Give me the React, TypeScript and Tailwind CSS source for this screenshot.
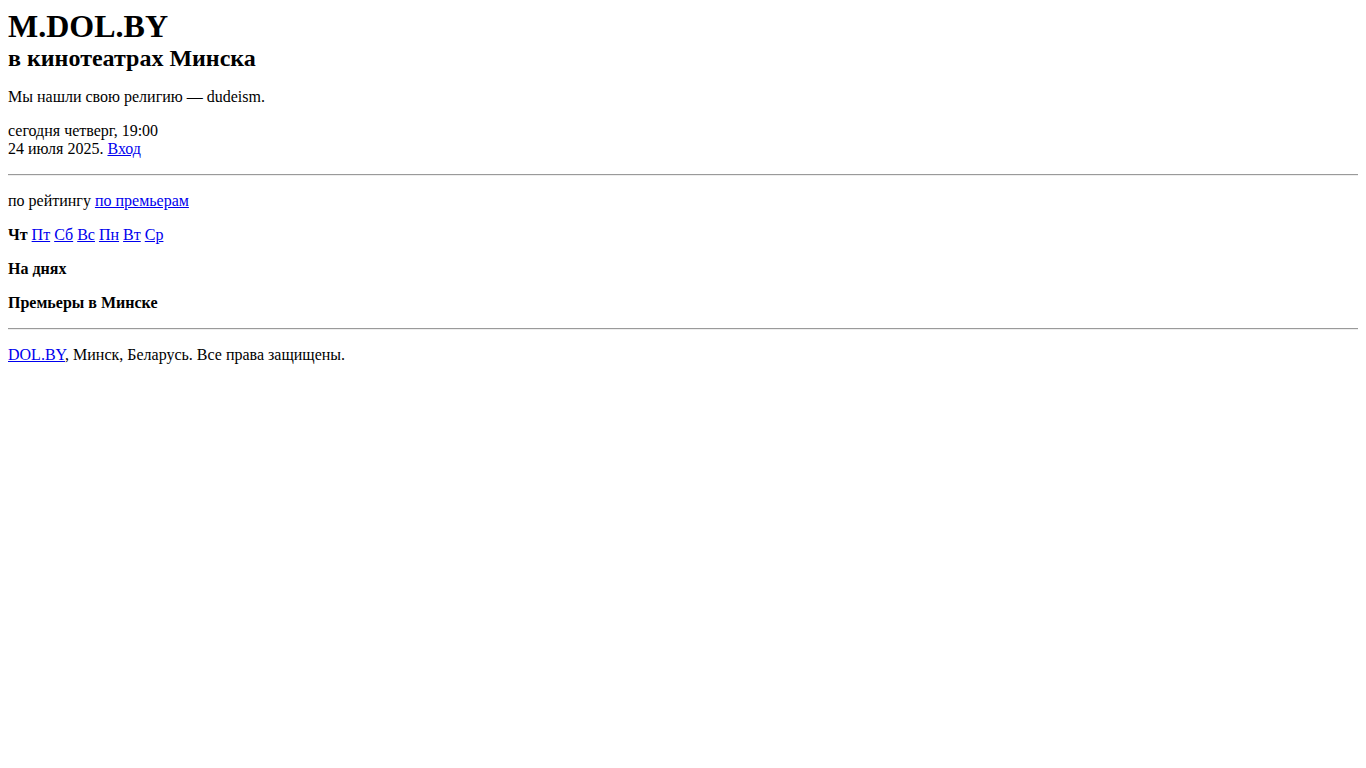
export default function App() {
  const days = ["Пт", "Сб", "Вс", "Пн", "Вт", "Ср"];
  const link = "text-[#0000ee] underline";

  return (
    <div className="m-2 font-['Liberation_Serif','Times_New_Roman',serif] text-[16px] leading-[18px] text-black">
      {/* шапка */}
      <h1 className="m-0 text-[32px] font-bold leading-[1.15]">M.DOL.BY</h1>
      <h2 className="m-0 text-[24px] font-bold leading-[1.15]">в кинотеатрах Минска</h2>
      <p className="my-4">Мы нашли свою религию — dudeism.</p>
      <p className="my-4">
        сегодня четверг, 19:00
        <br />
        24 июля 2025. <a href="#" className={link}>Вход</a>
      </p>
      <hr className="my-4 h-0.5 border-t border-b border-t-[#9a9a9a] border-b-[#eeeeee]" />

      <p className="my-4">
        по рейтингу <a href="#" className={link}>по премьерам</a>
      </p>
      <p className="my-4">
        <b>Чт</b>{" "}
        {days.map((d, i) => (
          <span key={d}>
            <a href="#" className={link}>{d}</a>
            {i < days.length - 1 ? " " : ""}
          </span>
        ))}
      </p>
      <p className="my-4 font-bold">На днях</p>
      <p className="my-4 font-bold">Премьеры в Минске</p>
      <hr className="my-4 h-0.5 border-t border-b border-t-[#9a9a9a] border-b-[#eeeeee]" />

      {/* подвал */}
      <p className="my-4">
        <a href="#" className={link}>DOL.BY</a>, Минск, Беларусь. Все права защищены.
      </p>
    </div>
  );
}
